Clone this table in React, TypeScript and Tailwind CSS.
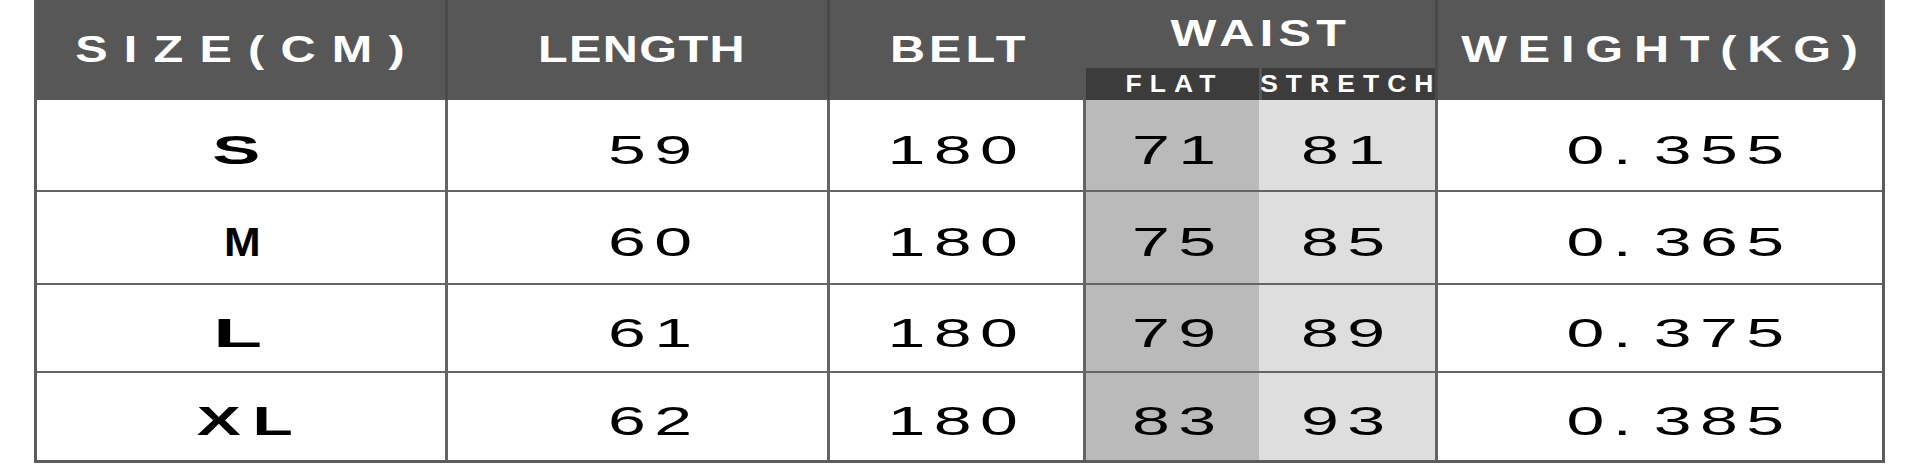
import React from "react";

const FONT = "font-['Liberation_Sans',Arial,sans-serif]";

function Num({
  children,
  bold = false,
  scale = "scale-x-[1.7]",
  tracking = "tracking-[5px]",
}: {
  children: React.ReactNode;
  bold?: boolean;
  scale?: string;
  tracking?: string;
}) {
  return (
    <span
      className={`inline-block ${scale} whitespace-pre text-[40px] leading-none ${tracking} text-black ${bold ? "font-bold" : "font-normal"}`}
    >
      {children}
    </span>
  );
}

function Head({ children, tracking }: { children: React.ReactNode; tracking: string }) {
  return (
    <span className={`inline-block scale-x-[1.35] whitespace-pre text-[36px] font-bold leading-none text-white ${tracking}`}>
      {children}
    </span>
  );
}

function Sub({ children }: { children: React.ReactNode }) {
  return (
    <span className="inline-block scale-x-[1.15] whitespace-pre text-[23px] font-bold leading-none tracking-[7px] text-white">
      {children}
    </span>
  );
}

function Weight({ v }: { v: string }) {
  return (
    <Num>
      0.<span className="inline-block w-[8px]" />
      {v}
    </Num>
  );
}

const rows = [
  { size: "S", sScale: "scale-x-[1.8]", sTrack: "tracking-[5px]", sPad: "", length: "59", belt: "180", flat: "71", stretch: "81", weight: "355", h: "border-b-2" },
  { size: "M", sScale: "scale-x-[1.1]", sTrack: "tracking-[5px]", sPad: "pl-[8px]", length: "60", belt: "180", flat: "75", stretch: "85", weight: "365", h: "border-b-2" },
  { size: "L", sScale: "scale-x-[2]", sTrack: "tracking-[5px]", sPad: "pl-[4px]", length: "61", belt: "180", flat: "79", stretch: "89", weight: "375", h: "border-b-2" },
  { size: "XL", sScale: "scale-x-[1.65]", sTrack: "tracking-[7px]", sPad: "pl-[20px]", length: "62", belt: "180", flat: "83", stretch: "93", weight: "385", h: "" },
];

export default function App() {
  const cell = "flex items-center justify-center pt-[9px] border-[#646464]";
  return (
    <div className={`h-[465px] w-[1919px] overflow-hidden bg-white pl-[34px] ${FONT}`}>
      <div className="grid w-[1851px] grid-cols-[411px_382px_256px_173px_179px_444px] grid-rows-[68px_32px_92px_93px_88px_87px] border-x-[3px] border-b-[3px] border-[#5c5c5c]">
        {/* header */}
        <div className="row-span-2 flex items-center justify-center border-r-[3px] border-[#4a4a4a] bg-[#575757] pl-[14px]">
          <Head tracking="tracking-[12px]">SIZE(CM)</Head>
        </div>
        <div className="row-span-2 flex items-center justify-center border-r-[3px] border-[#4a4a4a] bg-[#575757] pl-[8px]">
          <Head tracking="tracking-[1px]">LENGTH</Head>
        </div>
        <div className="row-span-2 flex items-center justify-center bg-[#575757] pl-[4px]">
          <Head tracking="tracking-[3px]">BELT</Head>
        </div>
        <div className="col-span-2 flex items-center justify-center border-r-[3px] border-[#4a4a4a] bg-[#575757]">
          <Head tracking="tracking-[4px]">WAIST</Head>
        </div>
        <div className="row-span-2 flex items-center justify-center bg-[#575757] pl-[10px]">
          <Head tracking="tracking-[8px]">WEIGHT(KG)</Head>
        </div>
        <div className="flex items-center justify-center bg-[#3c3c3c] pl-[4px]">
          <Sub>FLAT</Sub>
        </div>
        <div className="flex items-center justify-center border-l-[3px] border-r-[3px] border-l-[#575757] border-r-[#4a4a4a] bg-[#3c3c3c] pl-[4px]">
          <Sub>STRETCH</Sub>
        </div>

        {/* data rows */}
        {rows.map((r) => (
          <React.Fragment key={r.size}>
            <div className={`${cell} ${r.h} border-r-[3px] bg-white ${r.sPad}`}>
              <Num bold scale={r.sScale} tracking={r.sTrack}>
                {r.size}
              </Num>
            </div>
            <div className={`${cell} ${r.h} border-r-[3px] bg-white pl-[33px]`}>
              <Num>{r.length}</Num>
            </div>
            <div className={`${cell} ${r.h} border-r-[3px] bg-white`}>
              <Num>{r.belt}</Num>
            </div>
            <div className={`${cell} ${r.h} bg-[#bababa] pl-[12px]`}>
              <Num>{r.flat}</Num>
            </div>
            <div className={`${cell} ${r.h} border-r-[3px] bg-[#dedede]`}>
              <Num>{r.stretch}</Num>
            </div>
            <div className={`${cell} ${r.h} bg-white pl-[40px]`}>
              <Weight v={r.weight} />
            </div>
          </React.Fragment>
        ))}
      </div>
    </div>
  );
}
